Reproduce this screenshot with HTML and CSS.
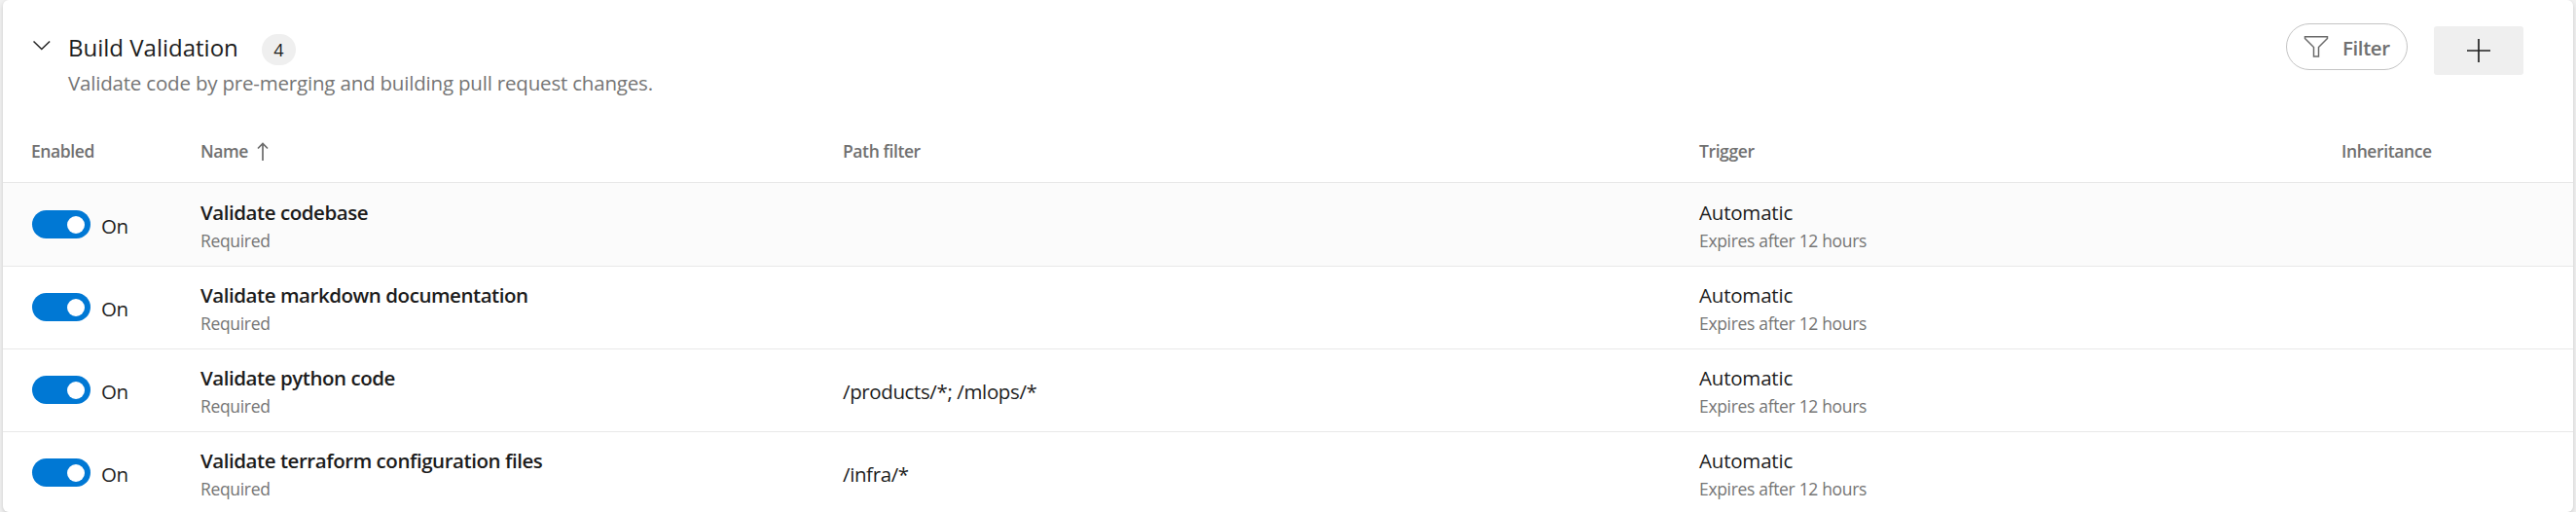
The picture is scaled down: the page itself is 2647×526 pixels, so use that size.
FILE: index.html
```
<!DOCTYPE html>
<html lang="en">
<head>
<meta charset="utf-8">
<title>Build Validation</title>
<link rel="stylesheet" href="styles.css">
</head>
<body>
<section class="card">
  <header class="head">
    <svg class="chevron" width="18" height="12" viewBox="0 0 18 12"><path d="M.5 1.500l8.300 8 8.300-8" fill="none" stroke="#222" stroke-width="1.5"/></svg>
    <div class="heading">
      <div class="title-line"><h2 class="title">Build Validation</h2><span class="badge">4</span></div>
      <p class="desc">Validate code by pre-merging and building pull request changes.</p>
    </div>
    <div class="actions">
      <button class="filter">
        <svg width="26" height="24" viewBox="0 0 26 24"><path d="M1.5 1.7h23v1.8L15.500 12.500V22h-5V12.500L1.500 3.500z" fill="none" stroke="#6b6b6b" stroke-width="1.5"/></svg>
        <span>Filter</span>
      </button>
      <button class="add" aria-label="Add"><svg width="24" height="24" viewBox="0 0 24 24"><path d="M12 0v24M0 12h24" fill="none" stroke="#222" stroke-width="1.7"/></svg></button>
    </div>
  </header>
  <div class="grid columns">
    <div>Enabled</div>
    <div class="sorted">Name<svg width="12" height="19" viewBox="0 0 12 19"><path d="M6 19V1.500M1 6.500l5-5 5 5" fill="none" stroke="#6b6b6b" stroke-width="1.700"/></svg></div>
    <div>Path filter</div>
    <div>Trigger</div>
    <div>Inheritance</div>
  </div>
  <div class="grid row hovered">
    <div class="enabled"><span class="toggle"></span><span class="state">On</span></div>
    <div><div class="name">Validate codebase</div><div class="sub">Required</div></div>
    <div class="path"></div>
    <div><div class="main">Automatic</div><div class="sub">Expires after 12 hours</div></div>
    <div></div>
  </div>
  <div class="grid row">
    <div class="enabled"><span class="toggle"></span><span class="state">On</span></div>
    <div><div class="name">Validate markdown documentation</div><div class="sub">Required</div></div>
    <div class="path"></div>
    <div><div class="main">Automatic</div><div class="sub">Expires after 12 hours</div></div>
    <div></div>
  </div>
  <div class="grid row">
    <div class="enabled"><span class="toggle"></span><span class="state">On</span></div>
    <div><div class="name">Validate python code</div><div class="sub">Required</div></div>
    <div class="path">/products/*; /mlops/*</div>
    <div><div class="main">Automatic</div><div class="sub">Expires after 12 hours</div></div>
    <div></div>
  </div>
  <div class="grid row">
    <div class="enabled"><span class="toggle"></span><span class="state">On</span></div>
    <div><div class="name">Validate terraform configuration files</div><div class="sub">Required</div></div>
    <div class="path">/infra/*</div>
    <div><div class="main">Automatic</div><div class="sub">Expires after 12 hours</div></div>
    <div></div>
  </div>
</section>
</body>
</html>
```
FILE: styles.css
```
* { box-sizing: border-box; }
body {
  margin: 0;
  height: 526px;
  padding: 0 3px;
  overflow: hidden;
  background: #f1f1f1;
  color: #1c1c1c;
  font: 20.5px/28px "Open Sans", "Noto Sans", sans-serif;
}
.card {
  height: 526px;
  overflow: hidden;
  background: #fff;
  border-radius: 6px;
  box-shadow: 0 2px 5px rgba(0, 0, 0, .16);
}
.head { display: flex; height: 137px; }
.chevron { margin: 41px 0 0 31px; flex: none; }
.heading { margin: 33px 0 0 18px; }
.title-line { display: flex; align-items: flex-start; height: 38px; }
.title { margin: 0; font-size: 24px; line-height: 32px; font-weight: 500; }
.badge {
  margin: 2px 0 0 24px;
  width: 35px;
  height: 32px;
  border-radius: 16px;
  background: #efefef;
  font-size: 18px;
  line-height: 32px;
  text-align: center;
}
.desc { margin: 0; color: #757575; letter-spacing: -.19px; }
.actions { display: flex; align-items: flex-start; margin-left: auto; padding-right: 51px; }
button { border: 0; padding: 0; font: inherit; color: inherit; }
.filter {
  display: flex;
  align-items: center;
  width: 125px;
  height: 48px;
  margin: 24px 27px 0 0;
  padding-left: 17px;
  border: 1px solid #c4c4c4;
  border-radius: 24px;
  background: #fff;
  color: #707070;
  font-weight: 600;
  letter-spacing: -.4px;
}
.filter span { margin: 1px 0 0 14px; }
.add {
  display: flex;
  align-items: center;
  justify-content: center;
  width: 92px;
  height: 50px;
  margin-top: 27px;
  border-radius: 3px;
  background: #efefef;
}
.grid {
  display: grid;
  grid-template-columns: 174px 660px 880px 660px 1fr;
  padding-left: 29px;
  border-bottom: 1px solid #e8e8e8;
}
.columns {
  height: 51px;
  padding-top: 6px;
  color: #707070;
  font-size: 17.5px;
  line-height: 24px;
  font-weight: 600;
  letter-spacing: -.4px;
}
.sorted { display: flex; align-items: flex-start; gap: 9px; }
.sorted svg { margin-top: 3px; }
.row { height: 85px; padding-top: 15px; }
.row:last-child { border-bottom: 0; }
.hovered { height: 86px; padding-top: 16px; background: #fbfbfb; }
.enabled { display: flex; align-items: flex-start; gap: 11px; padding: 12px 0 0 1px; }
.toggle {
  display: flex;
  justify-content: flex-end;
  width: 60px;
  height: 29px;
  padding: 6px;
  border-radius: 15px;
  background: #0078d4;
}
.toggle::before { content: ""; width: 18px; height: 18px; border-radius: 50%; background: #fff; }
.state { margin-top: 2px; letter-spacing: -.4px; }
.name { font-weight: 600; letter-spacing: -.45px; }
.main { letter-spacing: -.2px; }
.sub { color: #757575; font-size: 17.5px; line-height: 30px; letter-spacing: -.33px; }
.path { padding-top: 14px; letter-spacing: -.38px; }
```
